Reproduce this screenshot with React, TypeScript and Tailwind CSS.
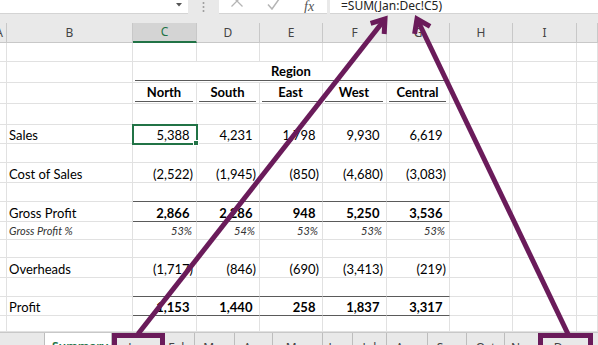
import React from 'react';

const GRID = 'grid grid-cols-[7px_126px_64px_63px_63px_64px_63px_63px_64px_1fr]';
const LINE = 'border-r border-b border-r-[#e1e1e1] border-b-[#e1e1e1]';
const LINE_DARK = 'border-r border-b border-r-[#e1e1e1] border-b-[#5a5a5a]';

type Kind = 'empty' | 'region' | 'head' | 'num' | 'bold' | 'pct';

interface RowDef {
  h: string;
  kind: Kind;
  label?: string;
  values?: string[];
  darkBottom?: boolean;
}

const rows: RowDef[] = [
  { h: 'h-[19px]', kind: 'empty' },
  { h: 'h-[21px]', kind: 'region' },
  { h: 'h-[21px]', kind: 'head', values: ['North', 'South', 'East', 'West', 'Central'] },
  { h: 'h-[21px]', kind: 'empty' },
  { h: 'h-[19px]', kind: 'num', label: 'Sales', values: ['5,388', '4,231', '1,798', '9,930', '6,619'] },
  { h: 'h-[19px]', kind: 'empty' },
  { h: 'h-[20px]', kind: 'num', label: 'Cost of Sales', values: ['(2,522)', '(1,945)', '(850)', '(4,680)', '(3,083)'] },
  { h: 'h-[19px]', kind: 'empty', darkBottom: true },
  { h: 'h-[20px]', kind: 'bold', label: 'Gross Profit', values: ['2,866', '2,286', '948', '5,250', '3,536'], darkBottom: true },
  { h: 'h-[18px]', kind: 'pct', label: 'Gross Profit %', values: ['53%', '54%', '53%', '53%', '53%'] },
  { h: 'h-[18px]', kind: 'empty' },
  { h: 'h-[20px]', kind: 'num', label: 'Overheads', values: ['(1,717)', '(846)', '(690)', '(3,413)', '(219)'] },
  { h: 'h-[19px]', kind: 'empty', darkBottom: true },
  { h: 'h-[19px]', kind: 'bold', label: 'Profit', values: ['1,153', '1,440', '258', '1,837', '3,317'], darkBottom: true },
  { h: 'h-[16px]', kind: 'empty' },
];

const colLetters = ['A', 'B', 'C', 'D', 'E', 'F', 'G', 'H', 'I', ''];

const tabs = [
  { name: '', w: 'w-[45px]' },
  { name: 'Summary', w: 'w-[67px]', active: true },
  { name: 'Jan', w: 'w-[51px]' },
  { name: 'Feb', w: 'w-[32px]' },
  { name: 'Mar', w: 'w-[40px]' },
  { name: 'Apr', w: 'w-[38px]' },
  { name: 'May', w: 'w-[50px]' },
  { name: 'Jun', w: 'w-[30px]' },
  { name: 'Jul', w: 'w-[34px]' },
  { name: 'Aug', w: 'w-[41px]' },
  { name: 'Sep', w: 'w-[39px]' },
  { name: 'Oct', w: 'w-[38px]' },
  { name: 'Nov', w: 'w-[35px]' },
  { name: 'Dec', w: 'w-[50px]' },
];

const Num: React.FC<{ v: string }> = ({ v }) =>
  v.startsWith('(') ? <>{v}</> : (
    <>
      {v}
      <span className="invisible">)</span>
    </>
  );

const FormulaBar: React.FC = () => (
  <div className="flex h-[14px] bg-[#e9e9e9] font-['Noto_Sans',sans-serif]">
    <div className="relative w-[188px] bg-white border-b border-[#d4d4d4]">
      <svg className="absolute left-[176px] top-[3px]" width="6" height="4" viewBox="0 0 6 4">
        <path d="M0 0h6L3 3.5z" fill="#555" />
      </svg>
    </div>
    <div className="w-[31px] flex justify-center">
      <svg width="3" height="14" viewBox="0 0 3 14">
        <circle cx="1.5" cy="3" r="1" fill="#9a9a9a" />
        <circle cx="1.5" cy="7" r="1" fill="#9a9a9a" />
        <circle cx="1.5" cy="11" r="1" fill="#9a9a9a" />
      </svg>
    </div>
    <div className="relative w-[108px] bg-white border-b border-[#d4d4d4] overflow-hidden">
      <svg className="absolute left-[11px] -top-[6px]" width="14" height="14" viewBox="0 0 14 14">
        <path d="M1.5 1.5l11 11M12.5 1.5l-11 11" stroke="#b5b5b5" strokeWidth="1.3" />
      </svg>
      <svg className="absolute left-[48px] -top-[4px]" width="14" height="14" viewBox="0 0 14 14">
        <path d="M1 8.5l4 4.5L13.5 1" stroke="#b5b5b5" strokeWidth="1.5" fill="none" />
      </svg>
      <span className="absolute left-[85px] -top-[4px] font-['Liberation_Serif',serif] italic text-[14px] text-[#555]">fx</span>
    </div>
    <div className="w-[3px]" />
    <div className="flex-1 bg-white border-b border-[#d4d4d4] pl-[11px] overflow-hidden">
      <div className="text-[12px] leading-[12px] text-[#222]">=SUM(Jan:Dec!C5)</div>
    </div>
  </div>
);

const HeaderRow: React.FC = () => (
  <div className={`${GRID} h-[20px] bg-[#e9e9e9] border-b border-[#c8c8c8] font-['Noto_Sans',sans-serif] text-[12px]`}>
    {colLetters.map((c, i) => (
      <div
        key={i}
        className={
          i === 0
            ? 'flex justify-end items-center pr-[3px] overflow-hidden border-r border-[#c8c8c8] text-[#444]'
            : i === 2
              ? 'flex justify-center items-center bg-[#d4d4d4] border-r border-[#c8c8c8] border-b-2 border-b-[#217346] text-[#217346]'
              : 'flex justify-center items-center border-r border-[#c8c8c8] text-[#444]'
        }
      >
        {c}
      </div>
    ))}
  </div>
);

const SheetRow: React.FC<{ row: RowDef }> = ({ row }) => {
  const dataLine = row.darkBottom ? LINE_DARK : LINE;
  const vals = row.values ?? ['', '', '', '', ''];
  return (
    <div className={`${GRID} ${row.h}`}>
      <div className={LINE} />
      <div
        className={`${LINE} flex items-end pl-[2px] whitespace-nowrap ${
          row.kind === 'pct' ? 'italic text-[11px] leading-[16px] text-[#333]' : 'text-[13px] leading-[16px]'
        }`}
      >
        {row.label}
      </div>
      {row.kind === 'region' ? (
        <div className={`${LINE} col-span-5 flex flex-col justify-end pl-[2px] pr-[2px] pb-[1px]`}>
          <div className="border-b border-[#5a5a5a] text-center font-bold text-[13px] leading-[17px]">Region</div>
        </div>
      ) : (
        vals.map((v, i) => {
          if (row.kind === 'head') {
            return (
              <div key={i} className={`${LINE} flex flex-col justify-end pl-[2px] pr-[3px] pb-[1px]`}>
                <div className="border-b border-[#5a5a5a] text-center font-bold text-[13px] leading-[17px]">{v}</div>
              </div>
            );
          }
          const selected = row.label === 'Sales' && i === 0;
          const base = `${dataLine} flex items-end justify-end whitespace-nowrap leading-[16px]`;
          if (row.kind === 'pct') {
            return (
              <div key={i} className={`${base} pr-[4px] italic text-[11px] text-[#333]`}>
                {v}
              </div>
            );
          }
          return (
            <div
              key={i}
              className={`${base} pr-[3px] text-[13px] ${row.kind === 'bold' ? 'font-bold' : ''} ${
                selected ? 'relative z-10 outline-2 outline-[#217346] -outline-offset-1' : ''
              }`}
            >
              {v && <Num v={v} />}
              {selected && (
                <span className="absolute -right-[3px] -bottom-[3px] w-[6px] h-[6px] bg-[#217346] border border-white" />
              )}
            </div>
          );
        })
      )}
      <div className={LINE} />
      <div className={LINE} />
      <div className={LINE} />
    </div>
  );
};

const Tabs: React.FC = () => (
  <div className="flex h-[13px] bg-[#e9e9e9] border-t border-[#c8c8c8] font-['Noto_Sans',sans-serif] text-[12px] text-[#444] overflow-hidden">
    {tabs.map((t, i) => (
      <div
        key={i}
        className={`${t.w} shrink-0 border-r border-[#bdbdbd] ${
          t.active ? 'bg-white text-[#217346] font-semibold -mt-px pl-[7px]' : 'text-center'
        } pt-[8px] leading-[14px]`}
      >
        {t.name}
      </div>
    ))}
  </div>
);

const Arrows: React.FC = () => (
  <svg className="absolute inset-0 pointer-events-none" width="598" height="345" viewBox="0 0 598 345">
    <g stroke="#6a1b5a" strokeWidth="5" fill="none">
      <path d="M138 334L385 19" />
      <polyline points="370.6,23.3 385,19 384.2,34" strokeLinejoin="miter" />
      <path d="M568 334L417 19" />
      <polyline points="414.6,33.8 417,19 430.1,26.4" strokeLinejoin="miter" />
      <rect x="114.5" y="335.5" width="48" height="20" />
      <rect x="540.5" y="335.5" width="50" height="20" />
    </g>
  </svg>
);

export default function App() {
  return (
    <div className="relative w-[598px] h-[345px] overflow-hidden bg-white text-black font-['Lato',sans-serif]">
      <FormulaBar />
      <div className="h-[9px] bg-[#e9e9e9]" />
      <HeaderRow />
      {rows.map((r, i) => (
        <SheetRow key={i} row={r} />
      ))}
      <Tabs />
      <Arrows />
    </div>
  );
}
